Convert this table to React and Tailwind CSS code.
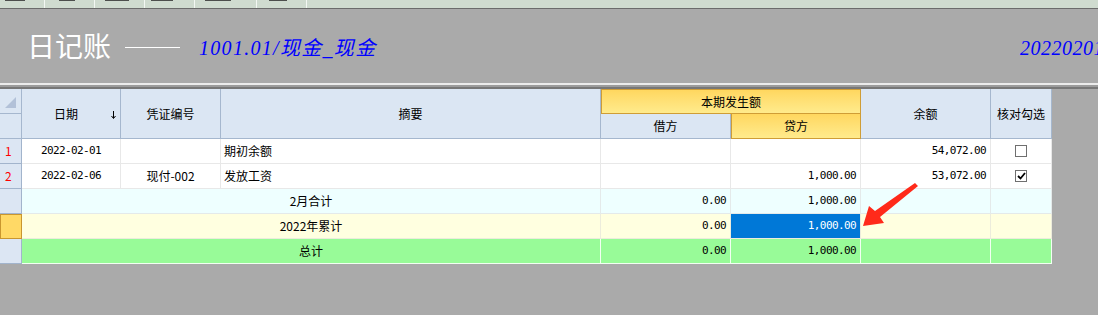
import React from "react";

const COLS = "grid-cols-[22px_99px_100px_380px_130px_130px_130px_61px]";
const CJK = "font-['Noto_Sans_CJK_SC',sans-serif]";
const MONO = "font-['DejaVu_Sans_Mono','Noto_Sans_CJK_SC',monospace] text-[11px] tracking-[-0.6px]";

function Num({ children }) {
  return <span className={MONO}>{children}</span>;
}

function CheckBox({ checked }) {
  return (
    <span className="flex h-[12px] w-[12px] items-center justify-center border border-[#6f6f6f] bg-white">
      {checked && (
        <svg width="9" height="8" viewBox="0 0 9 8">
          <path d="M1 4 L3.5 6.5 L8 1" fill="none" stroke="#000" strokeWidth="1.8" />
        </svg>
      )}
    </span>
  );
}

function RowHead({ n, active }) {
  return (
    <div
      className={
        active
          ? "border border-[#c9962f] bg-[#ffd966]"
          : "flex items-center border-r border-b border-[#a2b4cc] bg-[#dce6f3] pl-[5px] text-[12px] text-[#ff0000]"
      }
    >
      {n}
    </div>
  );
}

const cell = "flex items-center border-r border-b text-[12px] text-black";

function DetailRow({ n, date, voucher, memo, credit, balance, checked }) {
  const line = "border-[#e8e8e8] bg-white";
  return (
    <div className={`grid ${COLS} h-[25px]`}>
      <RowHead n={n} />
      <div className={`${cell} ${line} justify-center`}>
        <Num>{date}</Num>
      </div>
      <div className={`${cell} ${line} justify-center`}>{voucher}</div>
      <div className={`${cell} ${line} pl-[3px]`}>{memo}</div>
      <div className={`${cell} ${line}`} />
      <div className={`${cell} ${line} justify-end pr-[4px]`}>
        <Num>{credit}</Num>
      </div>
      <div className={`${cell} ${line} justify-end pr-[4px]`}>
        <Num>{balance}</Num>
      </div>
      <div className={`${cell} ${line} justify-center`}>
        <CheckBox checked={checked} />
      </div>
    </div>
  );
}

function SumRow({ label, bg, line, active, selected }) {
  return (
    <div className={`grid ${COLS} h-[25px]`}>
      <RowHead active={active} />
      <div className={`${cell} ${bg} ${line} col-span-3 justify-center`}>{label}</div>
      <div className={`${cell} ${bg} ${line} justify-end pr-[4px]`}>
        <Num>0.00</Num>
      </div>
      <div
        className={`${cell} ${line} justify-end pr-[4px] ${
          selected ? "bg-[#0078d7] text-white" : bg
        }`}
      >
        <Num>1,000.00</Num>
      </div>
      <div className={`${cell} ${bg} ${line}`} />
      <div className={`${cell} ${bg} ${line}`} />
    </div>
  );
}

export default function App() {
  const hdr = "flex items-center justify-center border-r border-b border-[#a5b7ce] bg-[#dbe6f3] text-[12px] text-black";
  const gold = "flex items-center justify-center border border-[#cf9d36] bg-linear-to-b from-[#ffd75f] to-[#ffeb8c] text-[12px] text-black";

  return (
    <div className={`relative h-[315px] w-[1098px] overflow-hidden bg-[#aaaaaa] ${CJK}`}>
      {/* toolbar strip, scrolled mostly out of view */}
      <div className="flex h-[9px] border-b border-[#6b6b6b] bg-[#cfdbcf]">
        {[
          [45, 5, 20],
          [50, 14, 16],
          [50, 10, 24],
          [50, 6, 22],
          [62, 10, 26],
          [50, 12, 18],
        ].map(([w, l, mw], i) => (
          <div key={i} className="relative h-full border-r border-[#f4f8f4]" style={{ width: w }}>
            <div className="absolute top-0 h-px bg-[#2a2a2a] opacity-80" style={{ left: l, width: mw }} />
          </div>
        ))}
      </div>

      {/* title bar */}
      <div className="flex h-[74px] items-center pb-[2px]">
        <span className="ml-[27px] text-[28px] leading-none text-white">日记账</span>
        <span className="ml-[14px] mt-[4px] h-px w-[55px] bg-white" />
        <span className="ml-[19px] mt-[6px] font-['Liberation_Serif','Noto_Sans_CJK_SC',serif] text-[20px] tracking-[1.3px] text-[#0000ff] italic">
          1001.01/现金_现金
        </span>
        <span className="ml-auto mr-[-6px] mt-[6px] font-['Liberation_Serif',serif] text-[20px] tracking-[0.5px] text-[#0000ff] italic">
          20220201
        </span>
      </div>

      {/* divider */}
      <div className="h-[2px] bg-[#ececec]" />
      <div className="h-[2px] bg-[#9c9c9c]" />
      <div className="h-[2px] bg-[#777777]" />

      {/* ledger grid */}
      <div className="w-[1052px]">
        <div className={`grid ${COLS} grid-rows-[25px_25px]`}>
          <div className="relative border-r border-b border-[#a5b7ce] bg-[#dbe6f3]">
            <svg className="absolute top-[8px] left-[5px]" width="11" height="11" viewBox="0 0 11 11">
              <path d="M11 0 L11 11 L0 11 Z" fill="#b2c1d8" />
            </svg>
          </div>
          <div className={`${hdr} relative row-span-2 pr-[10px]`}>
            日期
            <svg className="absolute top-[22px] right-[4px]" width="5" height="8" viewBox="0 0 5 8">
              <path d="M2.5 0 V7" stroke="#000" strokeWidth="1" />
              <path d="M0.5 5 L2.5 7.5 L4.5 5" fill="none" stroke="#000" strokeWidth="1" />
            </svg>
          </div>
          <div className={`${hdr} row-span-2`}>凭证编号</div>
          <div className={`${hdr} row-span-2`}>摘要</div>
          <div className={`${gold} col-span-2`}>本期发生额</div>
          <div className={`${hdr} row-span-2`}>余额</div>
          <div className={`${hdr} row-span-2`}>核对勾选</div>
          <div className="border-r border-b border-[#a5b7ce] bg-[#dbe6f3]" />
          <div className={hdr}>借方</div>
          <div className={`${gold} border-t-0`}>贷方</div>
        </div>

        <DetailRow n="1" date="2022-02-01" voucher="" memo="期初余额" credit="" balance="54,072.00" />
        <DetailRow n="2" date="2022-02-06" voucher="现付-002" memo="发放工资" credit="1,000.00" balance="53,072.00" checked />
        <SumRow label="2月合计" bg="bg-[#eeffff]" line="border-[#e4eaea]" />
        <SumRow label="2022年累计" bg="bg-[#ffffe0]" line="border-[#ececdc]" active selected />
        <SumRow label="总计" bg="bg-[#98fb98]" line="border-[#f2fff2]" />
      </div>

      {/* callout arrow */}
      <svg className="pointer-events-none absolute top-0 left-0" width="1098" height="315" viewBox="0 0 1098 315">
        <polygon
          points="915,183 918,186 880,217 884,223 863,226 869,206 875,211"
          fill="#ff2a1a"
        />
      </svg>
    </div>
  );
}
